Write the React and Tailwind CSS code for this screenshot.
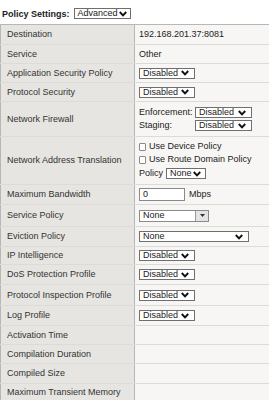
import React from "react";

const Chevron = () => (
  <svg width="8" height="6" viewBox="0 0 8 6" className="shrink-0">
    <path d="M0.8 1 L4 4.4 L7.2 1" fill="none" stroke="#111" strokeWidth="1.9" />
  </svg>
);

function Select({ label, w = "w-[56px]", pr = "pr-[5px]" }) {
  return (
    <div className={`${w} h-[11px] flex items-center justify-between bg-white border border-[#6f6f6f] pl-[3px] ${pr} leading-none text-[9px] text-[#222]`}>
      <span>{label}</span>
      <Chevron />
    </div>
  );
}

function Combo({ label }) {
  return (
    <div className="w-[70px] h-[12px] flex bg-white border border-[#8a8a8a] text-[9px] leading-none text-[#222]">
      <span className="flex-1 flex items-center pl-[3px]">{label}</span>
      <span className="w-[13px] flex items-center justify-center bg-[#e4e4e4] border-l border-[#9a9a9a]">
        <svg width="5" height="3" viewBox="0 0 5 3">
          <path d="M0 0 L5 0 L2.5 3 Z" fill="#333" />
        </svg>
      </span>
    </div>
  );
}

const Check = () => (
  <span className="inline-block w-[7px] h-[8px] bg-white border border-[#8a8a8a] rounded-[1px] mr-[3px]" />
);

function Row({ label, h, children }) {
  return (
    <div className={`flex ${h} border-b border-[#dcdbd7]`}>
      <div className="w-[135px] shrink-0 flex items-center pl-[6px] bg-[#e6e5e1] border-l border-[#b8b7b3] border-r border-r-[#b8b7b3] text-[#333]">
        {label}
      </div>
      <div className="flex-1 flex items-center pl-[4px] bg-[#f7f6f4] text-[#222]">{children}</div>
    </div>
  );
}

export default function App() {
  return (
    <div className="w-[269px] h-[400px] overflow-hidden bg-white text-[9px] leading-none" style={{ fontFamily: '"Liberation Sans", Arial, sans-serif' }}>
      {/* header */}
      <div className="h-[24px] flex items-end pb-[5px] pl-[2px] gap-[4px]">
        <span className="font-bold text-[#222]">Policy Settings:</span>
        <Select label="Advanced" w="w-[57px]" pr="pr-[3px]" />
      </div>

      <div className="border-t border-[#b8b7b3]">
        <Row label="Destination" h="h-[20px]">192.168.201.37:8081</Row>
        <Row label="Service" h="h-[19px]">Other</Row>
        <Row label="Application Security Policy" h="h-[19px]"><Select label="Disabled" /></Row>
        <Row label="Protocol Security" h="h-[19px]"><Select label="Disabled" /></Row>
        <Row label="Network Firewall" h="h-[35px]">
          <div className="flex flex-col gap-[2px]">
            <div className="flex items-center">
              <span className="w-[56px]">Enforcement:</span>
              <Select label="Disabled" w="w-[57px]" />
            </div>
            <div className="flex items-center">
              <span className="w-[56px]">Staging:</span>
              <Select label="Disabled" w="w-[57px]" />
            </div>
          </div>
        </Row>
        <Row label="Network Address Translation" h="h-[48px]">
          <div className="flex flex-col gap-[4px]">
            <div className="flex items-center"><Check />Use Device Policy</div>
            <div className="flex items-center"><Check />Use Route Domain Policy</div>
            <div className="flex items-center gap-[3px]">
              Policy
              <Select label="None" w="w-[40px]" pr="pr-[4px]" />
            </div>
          </div>
        </Row>
        <Row label="Maximum Bandwidth" h="h-[20px]">
          <div className="w-[46px] h-[13px] bg-white border border-[#8a8a8a] flex items-center pl-[3px]">0</div>
          <span className="ml-[4px]">Mbps</span>
        </Row>
        <Row label="Service Policy" h="h-[22px]"><Combo label="None" /></Row>
        <Row label="Eviction Policy" h="h-[20px]"><Select label="None" w="w-[110px]" /></Row>
        <Row label="IP Intelligence" h="h-[18px]"><Select label="Disabled" /></Row>
        <Row label="DoS Protection Profile" h="h-[20px]"><Select label="Disabled" /></Row>
        <Row label="Protocol Inspection Profile" h="h-[21px]"><Select label="Disabled" /></Row>
        <Row label="Log Profile" h="h-[20px]"><Select label="Disabled" /></Row>
        <Row label="Activation Time" h="h-[19px]" />
        <Row label="Compilation Duration" h="h-[19px]" />
        <Row label="Compiled Size" h="h-[20px]" />
        <Row label="Maximum Transient Memory" h="h-[17px]" />
      </div>
    </div>
  );
}
